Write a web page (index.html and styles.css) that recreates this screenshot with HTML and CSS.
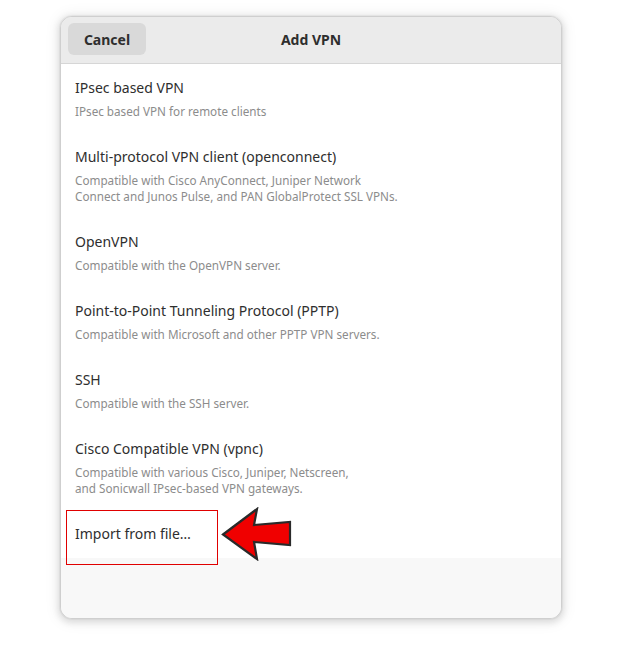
FILE: index.html
```html
<!DOCTYPE html>
<html>
<head>
<meta charset="utf-8">
<link rel="stylesheet" href="styles.css">
</head>
<body>
<div class="stage">
  <div class="dialog">
    <div class="header">
      <button class="cancel">Cancel</button>
      <div class="title">Add VPN</div>
      <div class="spacer"></div>
    </div>
    <div class="list">
      <div class="row">
        <div class="row-title">IPsec based VPN</div>
        <div class="row-sub">IPsec based VPN for remote clients</div>
      </div>
      <div class="row">
        <div class="row-title">Multi-protocol VPN client (openconnect)</div>
        <div class="row-sub">Compatible with Cisco AnyConnect, Juniper Network<br>Connect and Junos Pulse, and PAN GlobalProtect SSL VPNs.</div>
      </div>
      <div class="row">
        <div class="row-title">OpenVPN</div>
        <div class="row-sub">Compatible with the OpenVPN server.</div>
      </div>
      <div class="row">
        <div class="row-title">Point-to-Point Tunneling Protocol (PPTP)</div>
        <div class="row-sub">Compatible with Microsoft and other PPTP VPN servers.</div>
      </div>
      <div class="row">
        <div class="row-title">SSH</div>
        <div class="row-sub">Compatible with the SSH server.</div>
      </div>
      <div class="row">
        <div class="row-title">Cisco Compatible VPN (vpnc)</div>
        <div class="row-sub">Compatible with various Cisco, Juniper, Netscreen,<br>and Sonicwall IPsec-based VPN gateways.</div>
      </div>
      <div class="row row-import">
        <div class="row-title">Import from file…</div>
        <div class="highlight"></div>
        <svg class="arrow" width="74" height="54" viewBox="0 0 74 54">
          <polygon points="2,27.5 36,2 33,18 69,15 69,38 33,35 36,52" fill="#f00000" stroke="#2a2a2a" stroke-width="2.2" stroke-linejoin="miter"/>
        </svg>
      </div>
    </div>
    <div class="footer"></div>
  </div>
</div>
</body>
</html>
```
FILE: styles.css
```css
html, body {
  margin: 0;
  padding: 0;
  background: #ffffff;
}
.stage {
  width: 622px;
  height: 646px;
  padding-top: 16px;
  padding-left: 60px;
  box-sizing: border-box;
  font-family: "Noto Sans", "Open Sans", sans-serif;
}
.dialog {
  width: 502px;
  height: 603px;
  box-sizing: border-box;
  border: 1px solid #cfcfcf;
  border-radius: 12px;
  background: #f8f8f8;
  box-shadow: 0 0 0 1px rgba(0,0,0,0.03), 0 2px 6px 2px rgba(0,0,0,0.10), 0 1px 14px 4px rgba(0,0,0,0.05);
  display: flex;
  flex-direction: column;
  overflow: hidden;
}
.header {
  height: 47px;
  box-sizing: border-box;
  background: #ebebeb;
  border-bottom: 1px solid #d6d6d6;
  display: flex;
  align-items: center;
  padding: 0 7px 2px 7px;
}
.cancel {
  width: 78px;
  height: 32px;
  border: none;
  border-radius: 6px;
  background: #d9d9d9;
  font-family: inherit;
  font-weight: bold;
  font-size: 14px;
  color: #2e2e2e;
  padding: 0;
}
.title {
  flex: 1;
  text-align: center;
  font-weight: bold;
  font-size: 14px;
  color: #2e2e2e;
}
.spacer {
  width: 78px;
}
.list {
  background: #ffffff;
  display: flex;
  flex-direction: column;
}
.row {
  padding: 14px 14px 14px 14px;
  position: relative;
}
.row-title {
  font-size: 14px;
  line-height: 20px;
  color: #2e2e2e;
}
.row-sub {
  margin-top: 5px;
  font-size: 11.7px;
  line-height: 16px;
  color: #8c8c8c;
}
.row-import {
  padding-bottom: 14px;
}
.highlight {
  position: absolute;
  left: 5px;
  top: 0;
  width: 152px;
  height: 55px;
  box-sizing: border-box;
  border: 1px solid #e00000;
}
.arrow {
  position: absolute;
  left: 160px;
  top: -3px;
}
.footer {
  flex: 1;
  background: #f8f8f8;
}
```
